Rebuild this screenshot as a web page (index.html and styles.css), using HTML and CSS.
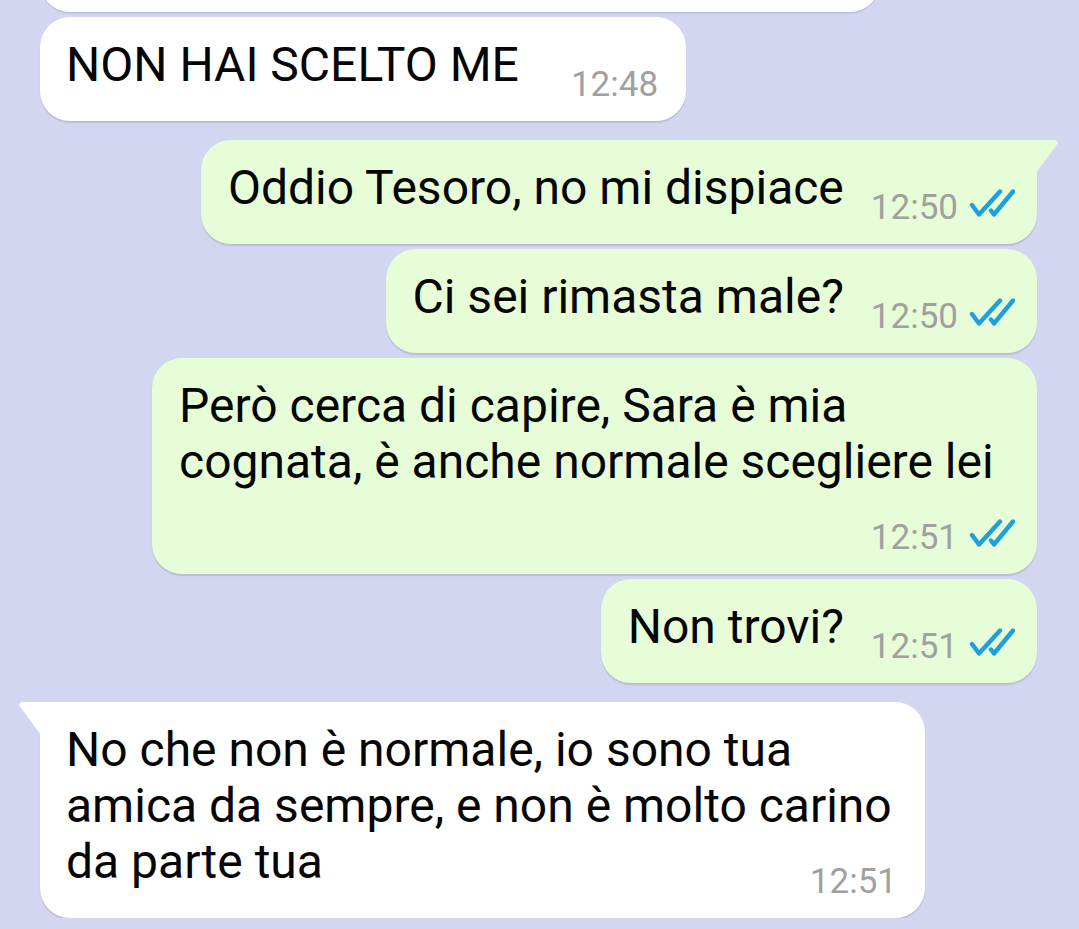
FILE: index.html
```html
<!DOCTYPE html>
<html lang="it">
<head>
<meta charset="utf-8">
<title>Chat</title>
<link rel="stylesheet" href="styles.css">
</head>
<body>
<div class="chat">
  <div class="row in first"><div class="bubble in stub"></div></div>

  <div class="row in">
    <div class="bubble in">NON HAI SCELTO ME<span class="meta wide"><span class="time">12:48</span></span></div>
  </div>

  <div class="row out group">
    <div class="bubble out tail">Oddio Tesoro, no mi dispiace<span class="meta"><span class="time">12:50</span><svg class="ticks" viewBox="0 0 46 28" width="46" height="28"><path d="M3 16 L10 25.5 L31 2.5"/><path d="M22 21.5 L25 25.5 L44 2.5"/></svg></span></div>
  </div>

  <div class="row out">
    <div class="bubble out">Ci sei rimasta male?<span class="meta"><span class="time">12:50</span><svg class="ticks" viewBox="0 0 46 28" width="46" height="28"><path d="M3 16 L10 25.5 L31 2.5"/><path d="M22 21.5 L25 25.5 L44 2.5"/></svg></span></div>
  </div>

  <div class="row out">
    <div class="bubble out">Però cerca di capire, Sara è mia cognata, è anche normale scegliere lei<span class="meta"><span class="time">12:51</span><svg class="ticks" viewBox="0 0 46 28" width="46" height="28"><path d="M3 16 L10 25.5 L31 2.5"/><path d="M22 21.5 L25 25.5 L44 2.5"/></svg></span></div>
  </div>

  <div class="row out">
    <div class="bubble out">Non trovi?<span class="meta"><span class="time">12:51</span><svg class="ticks" viewBox="0 0 46 28" width="46" height="28"><path d="M3 16 L10 25.5 L31 2.5"/><path d="M22 21.5 L25 25.5 L44 2.5"/></svg></span></div>
  </div>

  <div class="row in group">
    <div class="bubble in tail">No che non è normale, io sono tua amica da sempre, e non è molto carino da parte tua<span class="meta"><span class="time">12:51</span></span></div>
  </div>
</div>
</body>
</html>
```

FILE: styles.css
```css
html, body {
  margin: 0;
  padding: 0;
  background: #d3d6f0;
}

body {
  font-family: Roboto, "Noto Sans", "Liberation Sans", sans-serif;
  color: #050505;
  overflow: hidden;
}

.chat {
  display: flex;
  flex-direction: column;
  padding: 0 42px 0 40px;
}

.row {
  display: flex;
  margin-top: 5px;
}

.row.first { margin-top: 0; }

.row.group {
  margin-top: 19px;
}

.row.in { justify-content: flex-start; }
.row.out { justify-content: flex-end; }

.bubble {
  position: relative;
  display: flow-root;
  box-sizing: border-box;
  max-width: 885px;
  padding: 20px 28px 16px 26px;
  border-radius: 30px;
  font-size: 48px;
  line-height: 56px;
  box-shadow: 0 1.5px 1px rgba(60, 60, 90, 0.16);
}

.bubble.in { background: #ffffff; }
.bubble.out {
  background: #e6fdd8;
  padding: 20px 22px 16px 27px;
}

.bubble.stub {
  width: 840px;
  height: 60px;
  margin-top: -48px;
  padding: 0;
}

.meta {
  float: right;
  display: flex;
  align-items: flex-end;
  gap: 11px;
  margin-top: 28px;
  margin-left: 27px;
  height: 40px;
  font-size: 35px;
  line-height: 40px;
  color: #a0a0a0;
}

.meta.wide { margin-left: 52px; }

.time {
  display: block;
}

.ticks {
  display: block;
  margin-bottom: 11px;
  fill: none;
  stroke: #1e9fe0;
  stroke-width: 4.4;
  stroke-linecap: round;
  stroke-linejoin: round;
}

/* tails */
.bubble.out.tail { border-top-right-radius: 0; }
.bubble.in.tail { border-top-left-radius: 0; }

.bubble.tail::after {
  content: "";
  position: absolute;
  top: 0;
  width: 22px;
  height: 33px;
}

.bubble.out.tail::after {
  right: -21px;
  background: #e6fdd8;
  clip-path: polygon(0 0, 88% 0, 100% 6%, 97% 12%, 0 100%);
}

.bubble.in.tail::after {
  left: -21px;
  background: #ffffff;
  clip-path: polygon(100% 0, 12% 0, 0 6%, 3% 12%, 100% 100%);
}
```
